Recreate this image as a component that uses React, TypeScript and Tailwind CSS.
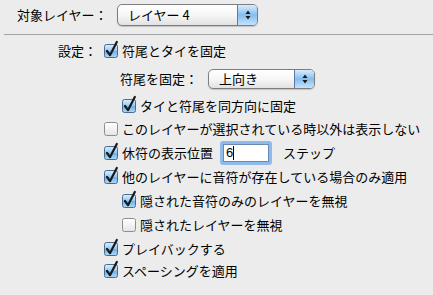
import React from "react";

const font = { fontFamily: '"Noto Sans CJK JP", "Noto Sans", sans-serif' };

function Box({ checked }: { checked: boolean }) {
  return (
    <svg width="14" height="14" viewBox="0 0 14 14" className="shrink-0 overflow-visible">
      <defs>
        <linearGradient id="cbOn" x1="0" y1="0" x2="0" y2="1">
          <stop offset="0" stopColor="#dceffd" />
          <stop offset="0.45" stopColor="#9ccdf4" />
          <stop offset="0.55" stopColor="#6cb3ec" />
          <stop offset="1" stopColor="#b0dbf9" />
        </linearGradient>
        <linearGradient id="cbOff" x1="0" y1="0" x2="0" y2="1">
          <stop offset="0" stopColor="#ffffff" />
          <stop offset="0.5" stopColor="#f3f3f3" />
          <stop offset="1" stopColor="#e4e4e4" />
        </linearGradient>
      </defs>
      <rect
        x="0.5"
        y="0.5"
        width="13"
        height="13"
        rx="2"
        fill={checked ? "url(#cbOn)" : "url(#cbOff)"}
        stroke={checked ? "#4a6a93" : "#8e8e8e"}
      />
      {checked && (
        <path
          d="M3 7 L6 11.2 L12.8 -2"
          stroke="#1a1a1a"
          strokeWidth="2.2"
          fill="none"
          strokeLinecap="round"
          strokeLinejoin="round"
        />
      )}
    </svg>
  );
}

function Arrows() {
  return (
    <svg width="8" height="12" viewBox="0 0 8 12">
      <path d="M4 1.5 L6.5 5 L1.5 5 Z" fill="#1a1a1a" />
      <path d="M4 10.5 L6.5 7 L1.5 7 Z" fill="#1a1a1a" />
    </svg>
  );
}

function Select({ text, width, height }: { text: string; width: string; height: string }) {
  return (
    <div
      className={`flex ${width} ${height} rounded-[5px] border border-[#7d7d7d] overflow-hidden bg-gradient-to-b from-white via-[#f7f7f7] to-[#e2e2e2] shadow-[0_1px_1px_rgba(0,0,0,0.18)]`}
    >
      <div className="flex-1 flex items-center pl-[10px] text-[13px] text-black">{text}</div>
      <div className="w-[20px] border-l border-[#5f78a8] bg-gradient-to-b from-[#d9ecfc] via-[#84bdee] to-[#c4e3fb] flex items-center justify-center">
        <Arrows />
      </div>
    </div>
  );
}

function Item({
  checked,
  label,
  indent,
  h,
}: {
  checked: boolean;
  label: string;
  indent?: boolean;
  h: string;
}) {
  return (
    <div className={`flex items-center ${h} ${indent ? "pl-[122px]" : "pl-[104px]"}`}>
      <Box checked={checked} />
      <span className="ml-[4px] text-[13px] text-black whitespace-nowrap">{label}</span>
    </div>
  );
}

export default function App() {
  return (
    <div className="w-[433px] h-[295px] bg-[#ececec] overflow-hidden" style={font}>
      <div className="flex items-center h-[28px] pt-[1px]">
        <span className="ml-[17px] w-[100px] text-[13px] text-black whitespace-nowrap">対象レイヤー：</span>
        <Select text="レイヤー 4" width="w-[141px]" height="h-[22px]" />
      </div>
      <div className="mt-[6px] ml-[4px] border-t border-[#a3a3a3]" />
      <div className="flex flex-col pt-[4px]">
        <div className="flex items-center h-[24px]">
          <span className="ml-[58px] w-[46px] text-[13px] text-black whitespace-nowrap">設定：</span>
          <Box checked />
          <span className="ml-[4px] text-[13px] text-black whitespace-nowrap">符尾とタイを固定</span>
        </div>
        <div className="flex items-center h-[32px]">
          <span className="ml-[120px] w-[88px] text-[13px] text-black whitespace-nowrap">符尾を固定：</span>
          <Select text="上向き" width="w-[107px]" height="h-[20px]" />
        </div>
        <Item checked indent h="h-[22px]" label="タイと符尾を同方向に固定" />
        <Item checked={false} h="h-[24px]" label="このレイヤーが選択されている時以外は表示しない" />
        <div className="flex items-center h-[23px] pl-[104px]">
          <Box checked />
          <span className="ml-[4px] w-[98px] text-[13px] text-black whitespace-nowrap">休符の表示位置</span>
          <div className="w-[52px] h-[24px] rounded-[3px] bg-[#8fbbea] p-[3px]">
            <div className="w-full h-full bg-white border border-[#6b89b8] flex items-center pl-[2px]">
              <span className="text-[13px] text-black leading-none" style={{ fontFamily: '"Liberation Sans", sans-serif' }}>6</span>
              <span className="w-[1px] h-[14px] bg-black" />
            </div>
          </div>
          <span className="ml-[11px] text-[13px] text-black whitespace-nowrap">ステップ</span>
        </div>
        <Item checked h="h-[25px]" label="他のレイヤーに音符が存在している場合のみ適用" />
        <Item checked indent h="h-[24px]" label="隠された音符のみのレイヤーを無視" />
        <Item checked={false} indent h="h-[24px]" label="隠されたレイヤーを無視" />
        <Item checked h="h-[24px]" label="プレイバックする" />
        <Item checked h="h-[20px]" label="スペーシングを適用" />
      </div>
    </div>
  );
}
